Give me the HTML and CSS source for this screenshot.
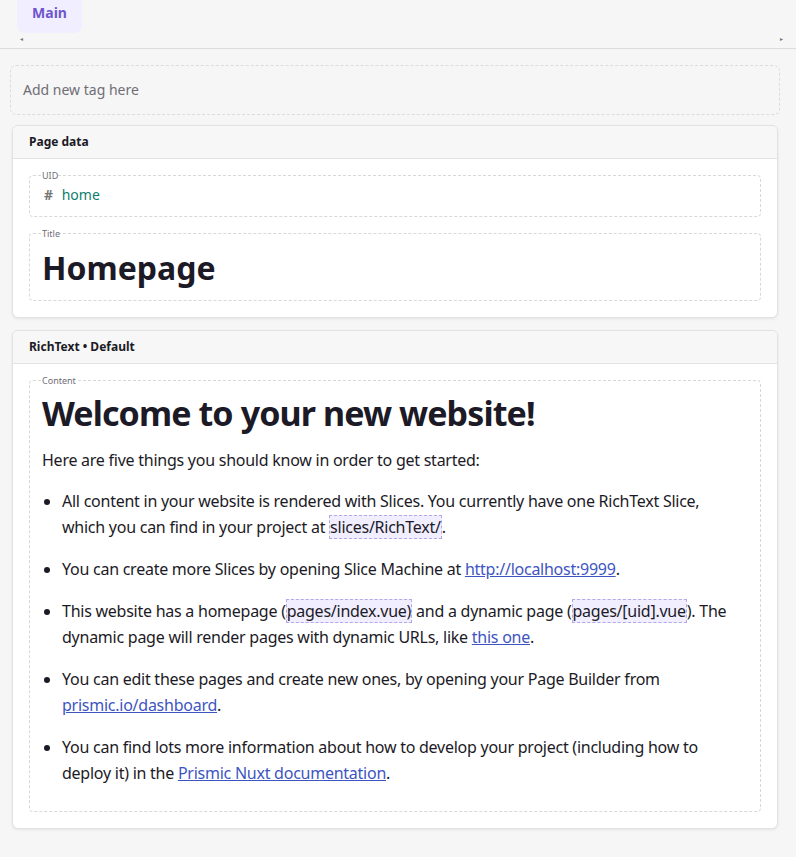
FILE: index.html
```html
<!DOCTYPE html>
<html>
<head>
    <title>Homepage - Page Builder</title>
    <meta name="viewport" content="width=device-width, initial-scale=1">
    <link rel="stylesheet" href="styles.css">
</head>
<body>
    <div class="tabs">
        <div class="tab-list">
            <div class="tab active">Main</div>
        </div>
        <div class="tab-scroll">
            <span class="arrow">&#9666;</span>
            <span class="arrow">&#9656;</span>
        </div>
    </div>

    <div class="page">
        <div class="tag-input">Add new tag here</div>

        <div class="card">
            <div class="card-header">Page data</div>
            <div class="card-body">
                <fieldset class="field">
                    <legend>UID</legend>
                    <div class="uid"><span class="hash">#</span> home</div>
                </fieldset>
                <fieldset class="field">
                    <legend>Title</legend>
                    <div class="title-value">Homepage</div>
                </fieldset>
            </div>
        </div>

        <div class="card">
            <div class="card-header">RichText &bull; Default</div>
            <div class="card-body">
                <fieldset class="field rich">
                    <legend>Content</legend>
                    <h1>Welcome to your new website!</h1>
                    <p>Here are five things you should know in order to get started:</p>
                    <ul>
                        <li>All content in your website is rendered with Slices. You currently have one RichText Slice, which you can find in your project at <code>slices/RichText/</code>.</li>
                        <li>You can create more Slices by opening Slice Machine at <a href="#">http://localhost:9999</a>.</li>
                        <li>This website has a homepage (<code>pages/index.vue)</code> and a dynamic page (<code>pages/[uid].vue</code>). The dynamic page will render pages with dynamic URLs, like <a href="#">this one</a>.</li>
                        <li>You can edit these pages and create new ones, by opening your Page Builder from <a href="#">prismic.io/dashboard</a>.</li>
                        <li>You can find lots more information about how to develop your project (including how to deploy it) in the <a href="#">Prismic Nuxt documentation</a>.</li>
                    </ul>
                </fieldset>
            </div>
        </div>
    </div>
</body>
</html>
```

FILE: styles.css
```css
body {
    margin: 0;
    font-family: "Noto Sans", "Open Sans", sans-serif;
    background-color: #f6f6f6;
    color: #1c1a26;
}

.tabs {
    height: 48px;
    border-bottom: 1px solid #dcdcdc;
}

.tab-list {
    display: flex;
    padding-left: 17px;
}

.tab {
    width: 65px;
    height: 33px;
    box-sizing: border-box;
    padding-top: 3px;
    text-align: center;
    font-size: 14px;
    font-weight: bold;
    border-radius: 0 0 8px 8px;
}

.tab.active {
    background-color: #f1efff;
    color: #6e56cf;
}

.tab-scroll {
    display: flex;
    justify-content: space-between;
    padding: 1px 13px 0 20px;
    font-size: 6px;
    line-height: 10px;
    color: #777;
}

.page {
    padding: 16px 16px 20px 10px;
}

.tag-input {
    border: 1px dashed #dcdcdc;
    border-radius: 6px;
    padding: 0 12px;
    height: 48px;
    line-height: 48px;
    font-size: 14px;
    color: #6f6e77;
}

.card {
    margin: 10px 2px 12px;
    background: white;
    border: 1px solid #e2e2e2;
    border-radius: 6px;
    box-shadow: 0 1px 3px rgba(0,0,0,0.08);
    overflow: hidden;
}

.card-header {
    background-color: #f7f7f7;
    border-bottom: 1px solid #e2e2e2;
    height: 32px;
    line-height: 32px;
    padding: 0 16px;
    font-size: 12px;
    font-weight: bold;
}

.card-body {
    padding: 10px 16px 16px;
}

.field {
    margin: 0 0 10px;
    padding: 0 12px;
    border: 1px dashed #d8d8d8;
    border-radius: 4px;
    min-width: 0;
}

.field:last-child {
    margin-bottom: 0;
}

.field legend {
    padding: 0;
    margin-left: 0;
    font-size: 9px;
    color: #6f6e77;
}

.uid {
    font-size: 14px;
    color: #0d7e6e;
    padding: 3px 0 11px;
    line-height: 20px;
}

.hash {
    color: #777;
    font-weight: bold;
    margin-left: 2px;
    margin-right: 5px;
}

.title-value {
    font-size: 32px;
    font-weight: bold;
    line-height: 40px;
    padding: 8px 0 12px;
}

.rich {
    padding-bottom: 25px;
}

.rich h1 {
    margin: 6px 0 14px;
    font-size: 34px;
    line-height: 40px;
    letter-spacing: -0.9px;
}

.rich p {
    margin: 0 0 15px;
    font-size: 16px;
    line-height: 26px;
    letter-spacing: -0.25px;
}

.rich ul {
    margin: 0;
    padding: 0 16px 0 20px;
    font-size: 16px;
    line-height: 26px;
    letter-spacing: -0.25px;
}

.rich li {
    margin-bottom: 16px;
}

.rich li:last-child {
    margin-bottom: 0;
}

code {
    font-family: inherit;
    background-color: #f0eeff;
    border: 1px dashed #b4a9e6;
}

a {
    color: #3e55c1;
}
```
